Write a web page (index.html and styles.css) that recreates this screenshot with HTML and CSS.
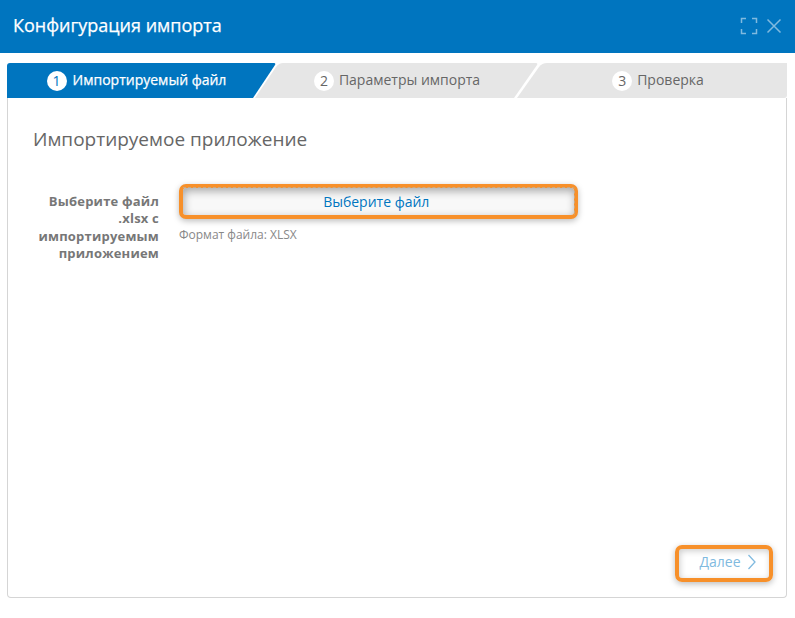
FILE: index.html
```html
<!DOCTYPE html>
<html lang="ru">
<head>
<meta charset="utf-8">
<title>Конфигурация импорта</title>
<link rel="stylesheet" href="styles.css">
</head>
<body>
<header class="header">
  <h1 class="title">Конфигурация импорта</h1>
  <div class="tools">
    <svg class="icon" width="18" height="18" viewBox="0 0 18 18"><path d="M1.500 6V1.500H6M12 1.500h4.500V6M16.500 12v4.500H12M6 16.500H1.500V12"/></svg>
    <svg class="icon" width="16" height="16" viewBox="0 0 16 16"><path d="M1.500 1.500l13 13M14.500 1.500l-13 13"/></svg>
  </div>
</header>
<main class="wizard">
  <nav class="steps">
    <svg class="steps-shape" width="780" height="35" viewBox="0 0 780 35">
      <path class="shape-active" d="M3 0H267q2 0 1 2L246 35H0V3q0-3 3-3z"/>
      <path class="shape" d="M276 0H529q2 0 1 2L507 35H248L269 4q3-4 7-4z"/>
      <path class="shape" d="M540 0H780V32q0 3-3 3H510L532 4q3-4 8-4z"/>
    </svg>
    <div class="step active"><span class="num">1</span><span class="step-name">Импортируемый файл</span></div>
    <div class="step"><span class="num">2</span><span class="step-name">Параметры импорта</span></div>
    <div class="step last"><span class="num">3</span><span class="step-name">Проверка</span></div>
  </nav>
  <section class="panel">
    <h2 class="heading">Импортируемое приложение</h2>
    <div class="field">
      <label class="label">Выберите файл<br>.xlsx с<br>импортируемым<br>приложением</label>
      <div class="control">
        <button class="choose highlight">Выберите файл</button>
        <p class="hint">Формат файла: XLSX</p>
      </div>
    </div>
    <button class="next highlight"><span class="next-text">Далее</span><svg class="chevron" width="10" height="16" viewBox="0 0 10 16"><path d="M1.500 1l6.500 7-6.500 7"/></svg></button>
  </section>
</main>
</body>
</html>
```
FILE: styles.css
```css
* { box-sizing: border-box; }
body {
  margin: 0;
  height: 618px;
  overflow: hidden;
  background: #fff;
  color: #666;
  font-family: "Open Sans", "Noto Sans", sans-serif;
}
h1, h2, p { margin: 0; font-weight: 400; }
.header {
  height: 53px;
  padding: 0 13px 2px;
  display: flex;
  align-items: center;
  justify-content: space-between;
  background: #0075bf;
}
.title { padding-bottom: 2px; color: #fff; font-size: 18px; line-height: 24px; -webkit-text-stroke: .25px #fff; }
.tools { display: flex; align-items: center; gap: 8px; }
.icon { fill: none; stroke: #80badf; stroke-width: 1.5; }
.wizard { padding: 10px 8px 0 7px; }
.steps {
  position: relative;
  height: 35px;
  display: grid;
  grid-template-columns: 260px 260px 260px;
}
.steps-shape { position: absolute; top: 0; left: 0; }
.shape { fill: #e6e6e6; }
.shape-active { fill: #0075bf; }
.step {
  position: relative;
  display: flex;
  align-items: center;
  justify-content: center;
  gap: 5px;
  font-size: 14px;
  line-height: 20px;
}
.step.active { gap: 6px; padding-right: 1px; }
.step.last { padding-left: 2px; }
.step-name { padding-bottom: 1px; }
.active .step-name { color: #fff; -webkit-text-stroke: .25px #fff; }
.num {
  width: 20px;
  height: 20px;
  border-radius: 50%;
  background: #fff;
  text-align: center;
}
.active .num { color: #0075bf; }
.panel {
  height: 500px;
  display: flex;
  flex-direction: column;
  align-items: flex-start;
  padding: 27px 13.500px 15px 25px;
  border: 1px solid #d5d5d5;
  border-top: 0;
  border-radius: 0 0 4px 4px;
}
.heading { font-size: 19px; line-height: 28px; }
.field { display: flex; gap: 20px; margin-top: 31px; }
.label {
  width: 126px;
  padding-top: 9px;
  text-align: right;
  font-size: 13px;
  font-weight: 700;
  line-height: 17.300px;
  letter-spacing: .2px;
  color: #777;
}
.highlight {
  border: 4px solid #f7902a;
  border-radius: 7px;
  background: transparent;
  font: 14px/20px "Open Sans", "Noto Sans", sans-serif;
}
.choose {
  position: relative;
  display: block;
  width: 398.500px;
  height: 35px;
  padding: 0 4px 0 0;
  color: #0075bf;
  background: #f8f8f8;
  box-shadow: 0 2px 6px #0004, inset 1px 3px 8px #0005;
}
.choose::after {
  content: "";
  position: absolute;
  inset: -1px -1px 0 0;
  border: 1px dashed #c9a882;
  border-left: 0;
  border-bottom: 0;
  border-radius: 0 3px 0 0;
}
.hint { margin-top: 7px; font-size: 12px; line-height: 18px; color: #888; }
.next {
  width: 98px;
  height: 37px;
  margin: auto 0 0;
  align-self: flex-end;
  display: flex;
  align-items: center;
  justify-content: center;
  gap: 6px;
  padding: 0 0 3px 9px;
  color: #80badf;
  box-shadow: 0 2px 6px #0004, inset 1px 2px 6px #0003;
}
.chevron { fill: none; stroke: #80badf; stroke-width: 1.3; }
```
